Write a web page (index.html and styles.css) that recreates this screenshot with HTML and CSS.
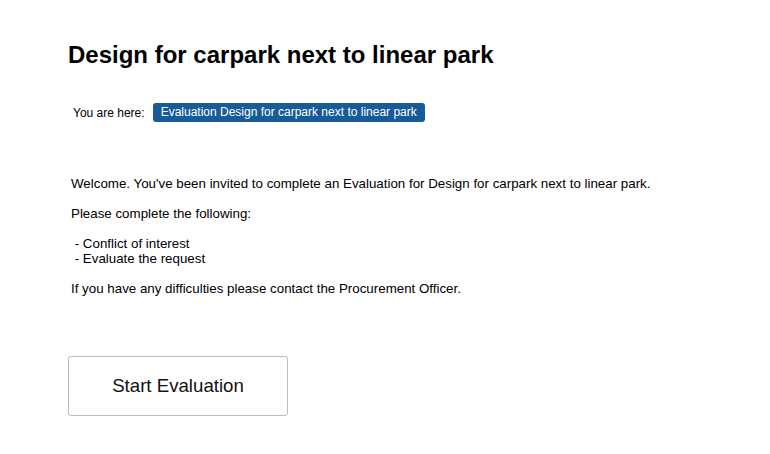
FILE: index.html
```html
<!DOCTYPE html>
<html lang="en">
<head>
    <meta charset="UTF-8">
    <title>Design for carpark next to linear park</title>
    <link rel="stylesheet" href="styles.css">
</head>
<body>
    <div class="page">
        <h1>Design for carpark next to linear park</h1>

        <div class="breadcrumb">
            <span class="crumb-label">You are here:</span>
            <span class="crumb">Evaluation Design for carpark next to linear park</span>
        </div>

        <div class="intro">
            <p>Welcome. You've been invited to complete an Evaluation for Design for carpark next to linear park.</p>
            <p>Please complete the following:</p>
            <p class="tasks">&nbsp;- Conflict of interest<br>&nbsp;- Evaluate the request</p>
            <p>If you have any difficulties please contact the Procurement Officer.</p>
        </div>

        <button type="button" class="start-button">Start Evaluation</button>
    </div>
</body>
</html>
```

FILE: styles.css
```css
body {
    margin: 0;
    font-family: "Liberation Sans", Arial, sans-serif;
    background-color: #fff;
    color: #000;
}
.page {
    padding: 40px 0 0 68px;
}
h1 {
    font-size: 24px;
    font-weight: bold;
    margin: 0;
    line-height: 30px;
}
.breadcrumb {
    display: flex;
    align-items: center;
    margin-top: 33px;
    padding-left: 5px;
    font-size: 12px;
}
.crumb-label {
    margin-right: 8px;
}
.crumb {
    background-color: #175b98;
    color: #fff;
    padding: 3px 8px;
    border-radius: 3px;
    line-height: 13px;
}
.intro {
    margin-top: 54px;
    padding-left: 3px;
    font-size: 13.33px;
    line-height: 15px;
}
.intro p {
    margin: 0 0 15px;
}
.start-button {
    margin-top: 45px;
    width: 220px;
    height: 60px;
    background-color: #fff;
    border: 1px solid #bcbcbc;
    border-radius: 3px;
    font-family: "Liberation Sans", Arial, sans-serif;
    font-size: 18.67px;
    color: #111;
    cursor: pointer;
}
```
